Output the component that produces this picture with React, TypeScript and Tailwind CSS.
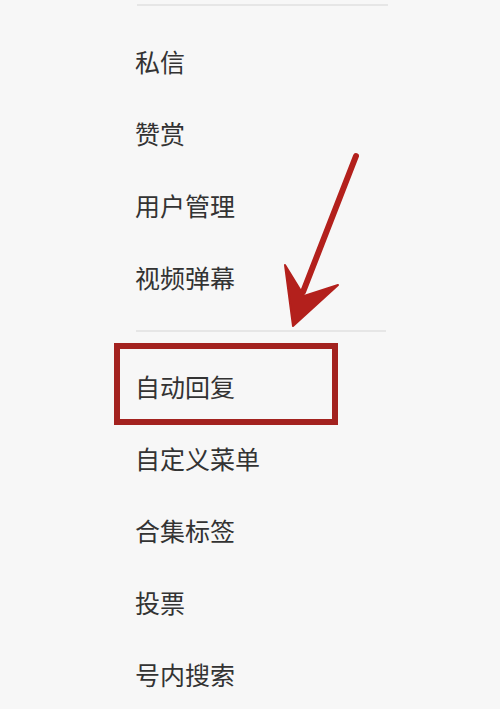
import React from "react";

const topItems = ["私信", "赞赏", "用户管理", "视频弹幕"];
const bottomItems = ["自动回复", "自定义菜单", "合集标签", "投票", "号内搜索"];

function MenuItem({ label }: { label: string }) {
  return (
    <div className="h-[72px] flex items-center pl-[135px] text-[25px] leading-none text-[#333333]">
      {label}
    </div>
  );
}

export default function App() {
  return (
    <div
      className="relative w-[500px] h-[709px] overflow-hidden bg-[#f7f7f7]"
      style={{ fontFamily: '"Noto Sans CJK SC", "Noto Sans", sans-serif' }}
    >
      <div className="pt-[4px]">
        <div className="ml-[137px] w-[251px] h-[2px] bg-[#e6e6e6]" />
        <div className="mt-[19px]">
          {topItems.map((item) => (
            <MenuItem key={item} label={item} />
          ))}
        </div>
        <div className="mt-[17px] ml-[136px] w-[250px] h-[2px] bg-[#e6e6e6]" />
        <div className="mt-[18px]">
          {bottomItems.map((item) => (
            <MenuItem key={item} label={item} />
          ))}
        </div>
      </div>

      {/* highlight box */}
      <div className="absolute left-[114px] top-[343px] w-[224px] h-[82px] border-[6px] border-[#a3221f]" />

      {/* pointer arrow */}
      <svg
        className="absolute left-0 top-0"
        width="500"
        height="709"
        viewBox="0 0 500 709"
      >
        <line
          x1="356"
          y1="156"
          x2="303"
          y2="292"
          stroke="#b3201c"
          strokeWidth="6"
          strokeLinecap="round"
        />
        <polygon
          points="285,265 304,296 338,285 293,326"
          fill="#b3201c"
          stroke="#b3201c"
          strokeWidth="2"
          strokeLinejoin="round"
        />
      </svg>
    </div>
  );
}
